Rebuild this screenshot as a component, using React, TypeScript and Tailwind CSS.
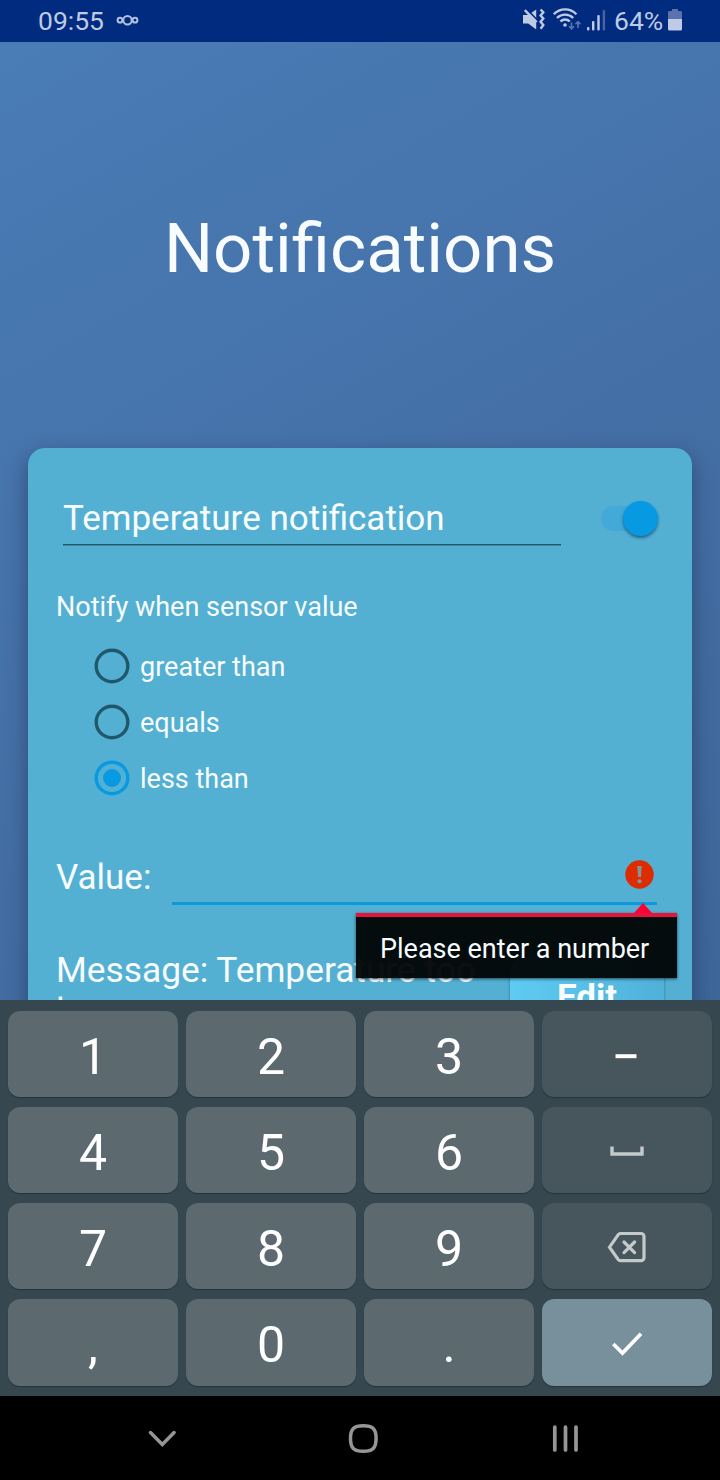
import { useState } from "react";
import type { ReactNode } from "react";

function StatusBar() {
  return (
    <header className="flex h-[42px] shrink-0 items-center bg-[#002b7f] text-[26.5px] leading-[42px] text-[#bfcae4]">
      <span className="ml-[38px] w-[66px] whitespace-nowrap">09:55</span>
      <svg className="ml-[12px] -mt-[2px]" width="24" height="12" viewBox="0 0 24 12" fill="none" stroke="#b5c1df" strokeWidth="2">
        <circle cx="11.500" cy="6.200" r="4.200" />
        <circle cx="4" cy="6.200" r="2.400" />
        <circle cx="19" cy="6.200" r="2.400" />
      </svg>
      <div className="flex-1" />
      <svg width="90" height="42" viewBox="520 0 90 42" fill="none">
        <path d="M523 15h5.200l8-5.500v20l-8-6H523z" fill="#bfcae4" />
        <path d="M526.500 9.200L538 20.800" stroke="#002b7f" strokeWidth="1.800" />
        <path d="M524.800 10.200L536.600 22.200" stroke="#bfcae4" strokeWidth="2.400" />
        <path d="M540.600 9.500l2.700 2.700-2.700 3.200 2.700 3.200-2.700 3.200 2.700 3.200-2.700 3.700" stroke="#bfcae4" strokeWidth="2.400" />
        <path d="M553.800 14.300a15.500 15.500 0 0 1 22.600 0" stroke="#bfcae4" strokeWidth="2.400" />
        <path d="M557 18a11.400 11.400 0 0 1 16.200 0" stroke="#bfcae4" strokeWidth="2.400" />
        <path d="M560.400 21.500a6.600 6.600 0 0 1 9.400 0" stroke="#bfcae4" strokeWidth="2.400" />
        <circle cx="565" cy="25" r="1.800" fill="#bfcae4" />
        <path d="M571.500 22.500v6M569 26.300l2.500 2.500 2.500-2.500M578 28v-6M575.500 24.200l2.500-2.500 2.500 2.500" stroke="#5a74b0" strokeWidth="1.600" />
        <g fill="#bfcae4">
          <rect x="587" y="27" width="2.400" height="3.400" rx="1" />
          <rect x="592" y="21" width="2.400" height="9.400" rx="1" />
          <rect x="597.300" y="15" width="2.400" height="15.400" rx="1" />
          <rect x="602.700" y="10" width="2.400" height="20.400" rx="1" fill="#4964a5" />
        </g>
      </svg>
      <span className="ml-[4px] w-[49px] whitespace-nowrap">64%</span>
      <svg className="ml-[5px] mr-[38px]" width="14" height="42" viewBox="0 0 14 42">
        <path d="M4 11V9h6v2h2.500a1.500 1.500 0 0 1 1.500 1.500V19H0v-6.500A1.500 1.500 0 0 1 1.500 11z" fill="#5a73af" />
        <path d="M0 19h14v10a1.500 1.500 0 0 1-1.500 1.500h-11A1.500 1.500 0 0 1 0 29z" fill="#bfcae4" />
      </svg>
    </header>
  );
}

function Radio({ label, checked, onSelect }: { label: string; checked: boolean; onSelect: () => void }) {
  return (
    <button type="button" role="radio" aria-checked={checked} onClick={onSelect} className="flex h-14 items-center text-left">
      <svg width="36" height="36" viewBox="0 0 36 36" fill="none">
        <circle cx="18" cy="18" r="15.8" stroke={checked ? "#0799e2" : "#21576a"} strokeWidth="3.400" />
        {checked && <circle cx="18" cy="18" r="9" fill="#0799e2" />}
      </svg>
      <span className="ml-[10px] pt-[3px] text-[27px]">{label}</span>
    </button>
  );
}

function ErrorPopup() {
  return (
    <div className="absolute left-[355.5px] top-[903px] w-[321px]">
      <svg className="ml-[277px] block" width="20" height="10" viewBox="0 0 20 10">
        <path d="M10 0l9 10H1z" fill="#ff0033" />
      </svg>
      <div className="h-[65px] border-t-4 border-[#e6143c] bg-[#000303]/95 pl-[24.5px] text-[27px] leading-[65px] shadow-[0_1px_3px_rgba(0,0,0,0.6)]">
        Please enter a number
      </div>
    </div>
  );
}

function NotificationCard() {
  const [mode, setMode] = useState("less than");
  return (
    <section className="mx-7 flex h-[700px] flex-col rounded-[17px] bg-[#53b0d3] pl-7 shadow-[0_8px_20px_rgba(25,35,70,0.5)]">
      <div className="mt-[44px] flex h-[54px]">
        <div className="ml-[7px] h-[53px] w-[498px] border-b border-[#21576a] text-[35px] leading-[54px] shadow-[0_1px_0_#3f8ba6]">Temperature notification</div>
        <div className="ml-[40px] flex h-[52px] w-[58px] items-center">
          <div className="flex h-[25px] w-[50px] items-center rounded-full bg-[#42a9d9]">
            <div className="ml-[22px] size-[35px] shrink-0 rounded-full bg-[#0799e2] shadow-[0_2px_3px_rgba(0,40,70,0.55)]" />
          </div>
        </div>
      </div>
      <div className="mt-[41px] h-[40px] text-[27px] leading-[40px]">Notify when sensor value</div>
      <div role="radiogroup" className="ml-[38px] mt-[11px] flex flex-col">
        {["greater than", "equals", "less than"].map((m) => (
          <Radio key={m} label={m} checked={mode === m} onSelect={() => setMode(m)} />
        ))}
      </div>
      <div className="mt-[44px] flex h-[55px]">
        <span className="w-[116px] text-[35px] leading-[56px]">Value:</span>
        <div className="flex h-[55px] w-[485px] justify-end border-b-3 border-[#0e98dc] pr-[3px] pt-[10px]">
          <svg width="29" height="29" viewBox="0 0 29 29">
            <circle cx="14.500" cy="14.500" r="14.200" fill="#dd2c00" />
            <path d="M12.300 6h4.400l-.7 11h-3z" fill="#82959d" />
            <circle cx="14.500" cy="21.300" r="2.100" fill="#82959d" />
          </svg>
        </div>
      </div>
      <div className="mt-[45px] flex">
        <p className="w-[454px] text-[35.3px] leading-[41px]">Message: Temperature too low</p>
        <button type="button" className="mt-[6px] h-[84px] w-[154px] rounded-[18px] bg-linear-to-r from-[#5fcbf2] to-[#50b1d9] text-center text-[35px] font-bold leading-[84px] shadow-[0_1px_3px_rgba(0,50,80,0.5)]">Edit</button>
      </div>
    </section>
  );
}

const lightKey = "h-[86px] bg-[#5c696e]";
const darkKey = "h-[86px] bg-[#47555c]";
const bottomKey = "h-[87px] bg-[#5c696e]";

function Key({ tone, children }: { tone: string; children: ReactNode }) {
  return (
    <button type="button" className={`flex items-center justify-center rounded-[12px] pt-[5px] text-[50px] leading-[86px] text-white shadow-[0_1px_1px_#263238] ${tone}`}>
      {children}
    </button>
  );
}

function Keyboard() {
  return (
    <div className="grid h-[396px] shrink-0 grid-cols-4 content-start gap-x-2 gap-y-[10px] bg-[#37474f] px-2 pt-[11px]">
      <Key tone={lightKey}>1</Key>
      <Key tone={lightKey}>2</Key>
      <Key tone={lightKey}>3</Key>
      <Key tone={darkKey}>
        <svg className="-ml-[2px]" width="40" height="40" viewBox="0 0 40 40"><path d="M9.500 17.200h21v4h-21z" fill="#fff" /></svg>
      </Key>
      <Key tone={lightKey}>4</Key>
      <Key tone={lightKey}>5</Key>
      <Key tone={lightKey}>6</Key>
      <Key tone={darkKey}>
        <svg width="40" height="40" viewBox="0 0 40 40" fill="none"><path d="M5 13.500v7.500h30v-7.500" stroke="#c4c9cc" strokeWidth="3.400" /></svg>
      </Key>
      <Key tone={lightKey}>7</Key>
      <Key tone={lightKey}>8</Key>
      <Key tone={lightKey}>9</Key>
      <Key tone={darkKey}>
        <svg width="40" height="40" viewBox="0 0 40 40" fill="none" stroke="#c4c9cc" strokeWidth="3.200">
          <path d="M13.500 4.500H34a3 3 0 0 1 3 3v21.200a3 3 0 0 1-3 3H13.500a3 3 0 0 1-2.400-1.300L2.500 18.200l8.600-12.400a3 3 0 0 1 2.400-1.300z" />
          <path d="M17 13l10.600 10.600M27.600 13L17 23.600" strokeLinecap="round" />
        </svg>
      </Key>
      <Key tone={bottomKey}>,</Key>
      <Key tone={bottomKey}>0</Key>
      <Key tone={bottomKey}>.</Key>
      <Key tone="h-[87px] bg-[#78909c]">
        <svg width="40" height="40" viewBox="0 0 40 40" fill="none"><path d="M6.300 19l9.200 9L34 8.800" stroke="#fff" strokeWidth="3.700" /></svg>
      </Key>
    </div>
  );
}

function NavBar() {
  return (
    <nav className="flex h-[84px] shrink-0 items-center justify-between bg-black pl-[142px] pr-[134px]">
      <svg width="40" height="40" viewBox="142 1418 40 40" fill="none"><path d="M150.500 1432.500l11.800 12 11.800-12" stroke="#969696" strokeWidth="3.500" strokeLinecap="round" /></svg>
      <svg width="40" height="40" viewBox="344 1418 40 40" fill="none"><path d="M363.300 1425.700c9.500 0 12.800 3.200 12.800 12.800s-3.300 12.800-12.800 12.800-12.800-3.200-12.800-12.800 3.300-12.800 12.800-12.800z" stroke="#969696" strokeWidth="3.500" /></svg>
      <svg width="40" height="40" viewBox="546 1418 40 40" fill="none"><path d="M554.800 1427v23M565.500 1427v23M576 1427v23" stroke="#969696" strokeWidth="3.700" strokeLinecap="round" /></svg>
    </nav>
  );
}

export default function App() {
  return (
    <div className="relative flex h-[1480px] w-[720px] flex-col overflow-hidden font-['Roboto',sans-serif] text-[#f8fcff]">
      <StatusBar />
      <main className="h-[958px] shrink-0 overflow-hidden bg-linear-[150deg] from-[#4a7cb5] via-[#4470a7] to-[#3e6699]">
        <h1 className="h-[406px] text-center text-[69px] leading-[414px]">Notifications</h1>
        <NotificationCard />
      </main>
      <ErrorPopup />
      <Keyboard />
      <NavBar />
    </div>
  );
}
